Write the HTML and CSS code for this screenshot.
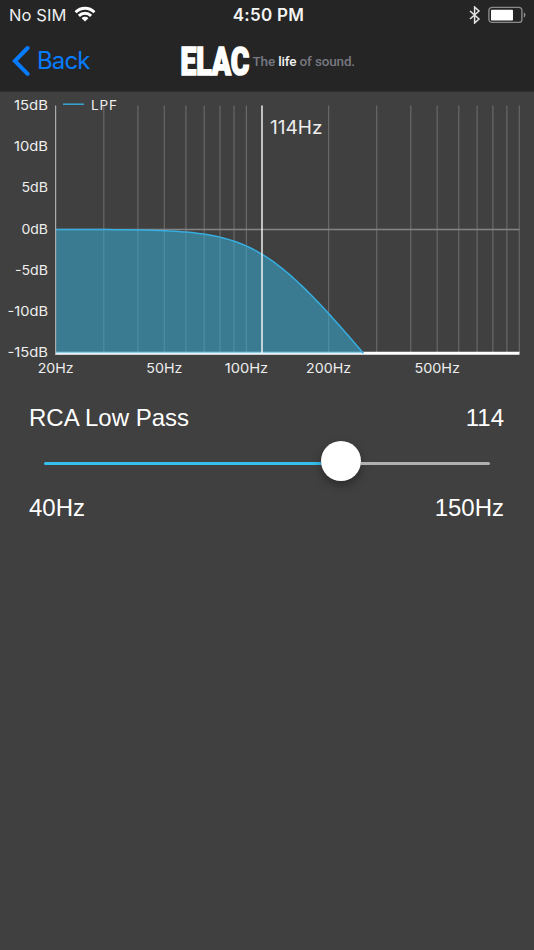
FILE: index.html
```html
<!DOCTYPE html>
<html lang="en">
<head>
<meta charset="utf-8">
<title>RCA Low Pass</title>
<link rel="stylesheet" href="styles.css">
</head>
<body>
<header class="header">
  <div class="status">
    <div class="carrier">
      <span>No SIM</span>
      <svg class="wifi" width="22" height="16" viewBox="0 0 22 16" fill="none" stroke="#fff" stroke-width="3">
        <path d="M1.6 6.2C6.9.9 15.1.9 20.4 6.2"/>
        <path d="M4.9 9.9C8.4 6.5 13.6 6.5 17.1 9.9"/>
        <path d="M11 15.4L7.6 12.2C9.5 10.4 12.5 10.4 14.4 12.2Z" fill="#fff" stroke="none"/>
      </svg>
    </div>
    <div class="clock">4:50 PM</div>
    <div class="indicators">
      <svg width="12" height="18" viewBox="0 0 12 18" fill="none" stroke="#e4e4e4" stroke-width="1.5"><path d="M1 5L10 13L5.6 17V1L10 5L1 13"/></svg>
      <svg width="38" height="18" viewBox="0 0 38 18">
        <rect x="0.9" y="1.4" width="33" height="15" rx="3.2" fill="none" stroke="#8b8b8b" stroke-width="1.4"/>
        <rect x="3" y="3.7" width="22" height="10.8" rx="0.8" fill="#fff"/>
        <path d="M35.8 6.2C38 7.2 38 10.6 35.8 11.6Z" fill="#8b8b8b"/>
      </svg>
    </div>
  </div>
  <nav class="nav">
    <a class="back">
      <svg width="19" height="32" viewBox="0 0 19 32" fill="none" stroke="#087cff" stroke-width="4" stroke-linecap="round"><path d="M16.6 3L3.9 16L16.6 28.8"/></svg>
      <span>Back</span>
    </a>
    <div class="brand">
      <svg class="mark" width="71" height="40"><text transform="translate(1.4,34.3) scale(1,1.24)" textLength="69" lengthAdjust="spacingAndGlyphs">ELAC</text></svg>
      <span class="tagline">The <b>life</b> of sound.</span>
    </div>
  </nav>
</header>
<main>
  <svg class="chart" id="chart" width="534" height="292" viewBox="0 92 534 292">
    <g id="grid"></g>
    <path class="zero" d="M55.5 229.5H519.5"/>
    <path class="base" d="M55 353.2H519.5"/>
    <path id="area" class="area"/>
    <path id="curve" class="curve"/>
    <path class="axis" d="M55.6 105.5V354.5"/>
    <path class="cutoff" d="M262 105.5V353"/>
    <path class="key" d="M63 104.2H84"/>
    <text class="tick" x="91" y="109.9" textLength="26">LPF</text>
    <text class="value" x="270" y="133.5" textLength="52.5" lengthAdjust="spacingAndGlyphs">114Hz</text>
    <g id="labels"></g>
  </svg>
  <section class="control">
    <div class="row"><span>RCA Low Pass</span><span>114</span></div>
    <div class="slider"><div class="filled"></div><div class="thumb"></div><div class="rest"></div></div>
    <div class="row"><span>40Hz</span><span>150Hz</span></div>
  </section>
</main>
<script src="chart.js"></script>
</body>
</html>
```
FILE: chart.js
```js
const NS = 'http://www.w3.org/2000/svg';
const xOf = f => 55.7 + Math.log10(f / 20) * 272.9;
const yOf = db => 229.4 - db * 8.25;
const gain = f => -10 * Math.log10(1 + Math.pow(f / 114, 4));

function add(parent, name, attrs, text) {
  const el = document.createElementNS(NS, name);
  for (const key in attrs) el.setAttribute(key, attrs[key]);
  if (text) el.textContent = text;
  document.getElementById(parent).appendChild(el);
}

for (const f of [30, 40, 50, 60, 70, 80, 90, 100, 200, 300, 400, 500, 600, 700, 800, 900, 1000]) {
  add('grid', 'path', { d: `M${xOf(f).toFixed(1)} 105.5V353` });
}

// Second-order Butterworth response, drawn down to the -15 dB floor
const end = 114 * Math.pow(Math.pow(10, 1.5) - 1, 0.25);
const points = [];
for (let i = 0; i <= 120; i++) {
  const f = 20 * Math.pow(end / 20, i / 120);
  points.push(`${xOf(f).toFixed(2)} ${yOf(gain(f)).toFixed(2)}`);
}
const line = 'M' + points.join('L');
document.getElementById('curve').setAttribute('d', line);
document.getElementById('area').setAttribute('d', line + 'V353.2H55.7Z');

const levels = [[15, 34], [10, 34], [5, 26.5], [0, 26.5], [-5, 33], [-10, 40.5], [-15, 40.5]];
for (const [db, width] of levels) {
  add('labels', 'text', { class: 'tick', x: 48 - width, y: yOf(db) + 4.1, textLength: width, lengthAdjust: 'spacingAndGlyphs' }, db + 'dB');
}
for (const [f, width] of [[20, 36], [50, 36], [100, 43.5], [200, 45], [500, 45.5]]) {
  add('labels', 'text', { class: 'tick', x: xOf(f) - width / 2, y: 373.3, textLength: width, lengthAdjust: 'spacingAndGlyphs' }, f + 'Hz');
}
```
FILE: styles.css
```css
* { box-sizing: border-box; }
body { margin: 0; min-height: 950px; background: #404040; color: #fff; font-family: Inter, "Liberation Sans", sans-serif; }
svg { display: block; flex: none; }
.header { height: 92px; background: #252525; border-bottom: 1px solid #303030; }
.status { height: 30px; display: grid; grid-template-columns: 1fr auto 1fr; align-items: center; padding: 0 8px 0 9px; }
.carrier { display: flex; align-items: center; gap: 7px; font-size: 16.5px; letter-spacing: .1px; color: #eee; }
.wifi { margin-top: -2px; }
.clock { font-size: 17px; font-weight: 600; letter-spacing: .3px; color: #f4f4f4; padding-left: 2px; }
.indicators { display: flex; justify-content: flex-end; align-items: center; gap: 7px; }
.nav { height: 61px; display: grid; grid-template-columns: 168px 1fr; align-items: center; padding-left: 11px; }
.back { display: flex; align-items: center; gap: 7px; color: #087cff; font-size: 24px; letter-spacing: -.9px; }
.brand { display: flex; align-items: center; }
.mark text { font: 900 33px Roboto, sans-serif; fill: #fff; stroke: #fff; stroke-width: 1.4px; font-size: 32px; }
.tagline { margin-left: 2.5px; font: 500 13.5px Roboto, sans-serif; letter-spacing: -.15px; color: #777881; white-space: nowrap; }
.tagline b { font-weight: 500; color: #f1f1f1; }
#grid path { stroke: #686868; stroke-width: 1.2; }
.zero { stroke: #858585; stroke-width: 1.3; }
.base { stroke: #fff; stroke-width: 3; }
.area { fill: #38a9d2; fill-opacity: .57; }
.curve { fill: none; stroke: #35addf; stroke-width: 1.5; }
.axis { stroke: #aaa; stroke-width: 1.2; }
.cutoff { stroke: #fff; stroke-opacity: .68; stroke-width: 2; }
.key { stroke: #35addf; stroke-width: 1.4; }
.tick { font-size: 13.6px; fill: #eee; }
.value { font-size: 18.3px; fill: #eee; }
.control { padding: 19px 30px 0 29px; font: 24px "Liberation Sans", sans-serif; }
.row { height: 30px; display: flex; justify-content: space-between; align-items: center; }
.slider { height: 60px; padding: 0 14px 0 15px; display: flex; align-items: center; }
.filled { width: 277px; height: 3px; background: #36c0ed; border-radius: 2px 0 0 2px; }
.thumb { width: 40px; height: 40px; margin-top: -4px; border-radius: 50%; background: #fff; box-shadow: 0 4px 10px rgba(0, 0, 0, .35); }
.rest { flex: 1; height: 3px; background: #b0b0b0; border-radius: 0 2px 2px 0; }
```
